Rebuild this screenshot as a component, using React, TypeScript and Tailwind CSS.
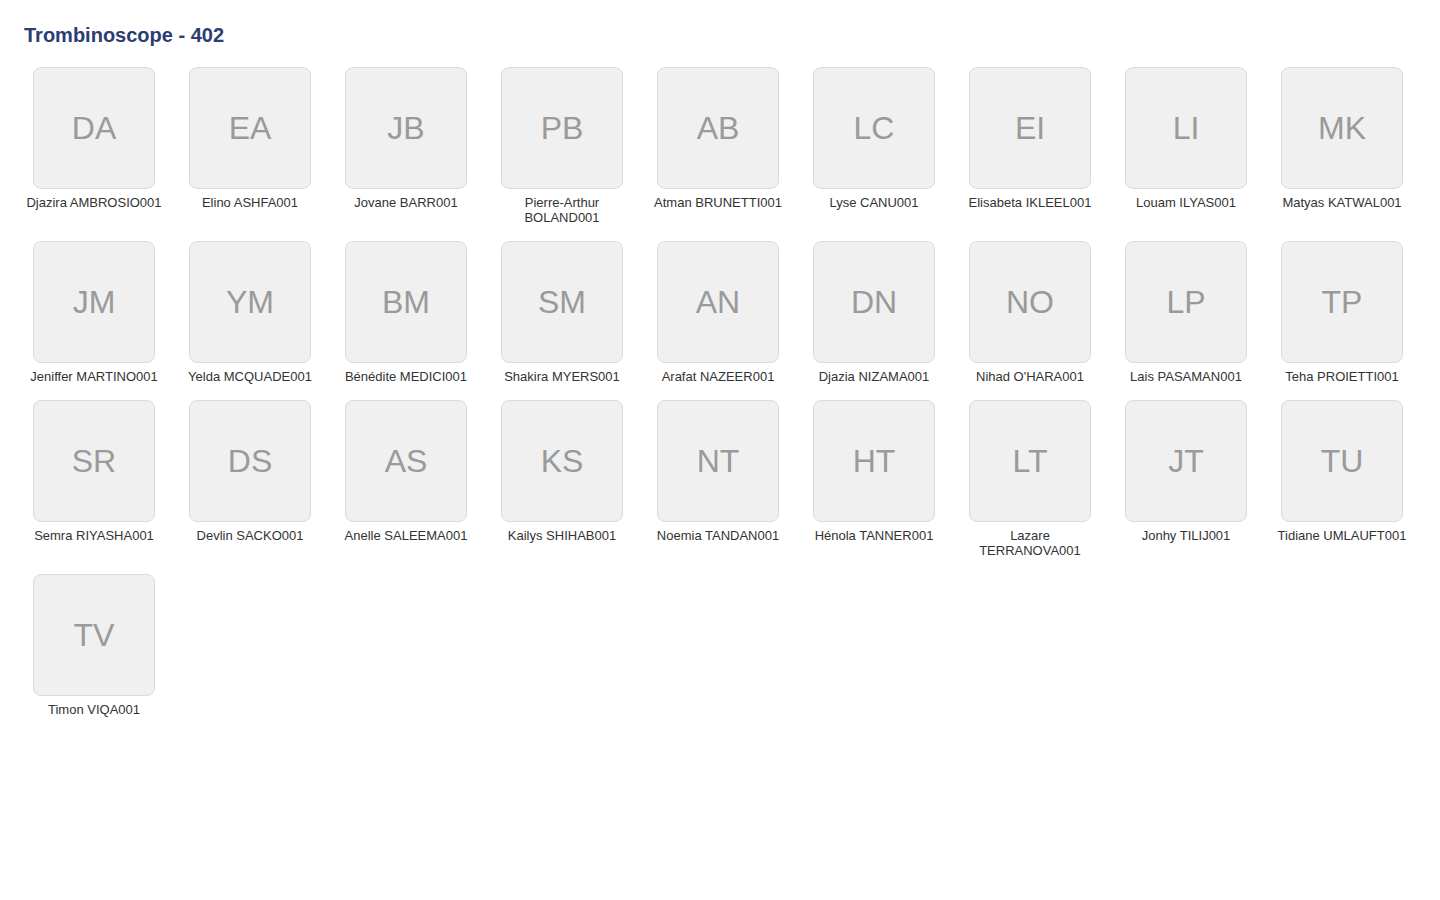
import React from "react";

const students = [
  "Djazira AMBROSIO001",
  "Elino ASHFA001",
  "Jovane BARR001",
  "Pierre-Arthur BOLAND001",
  "Atman BRUNETTI001",
  "Lyse CANU001",
  "Elisabeta IKLEEL001",
  "Louam ILYAS001",
  "Matyas KATWAL001",
  "Jeniffer MARTINO001",
  "Yelda MCQUADE001",
  "Bénédite MEDICI001",
  "Shakira MYERS001",
  "Arafat NAZEER001",
  "Djazia NIZAMA001",
  "Nihad O'HARA001",
  "Lais PASAMAN001",
  "Teha PROIETTI001",
  "Semra RIYASHA001",
  "Devlin SACKO001",
  "Anelle SALEEMA001",
  "Kailys SHIHAB001",
  "Noemia TANDAN001",
  "Hénola TANNER001",
  "Lazare TERRANOVA001",
  "Jonhy TILIJ001",
  "Tidiane UMLAUFT001",
  "Timon VIQA001",
];

function initials(name: string) {
  const parts = name.split(" ");
  const first = parts[0][0];
  const last = parts[parts.length - 1][0];
  return (first + last).toUpperCase();
}

export default function App() {
  return (
    <div
      className="min-h-screen bg-white px-6 pt-[23px]"
      style={{ fontFamily: '"Liberation Sans", Arial, sans-serif' }}
    >
      <h1 className="text-[20px] leading-[24px] font-bold text-[#2b3d72] mb-[20px]">
        Trombinoscope - 402
      </h1>
      <div className="flex flex-wrap gap-x-4 gap-y-4">
        {students.map((s) => (
          <div key={s} className="w-[140px] flex flex-col items-center">
            <div className="w-[122px] h-[122px] rounded-lg border border-[#dcdcdc] bg-[#f0f0f0] flex items-center justify-center">
              <span className="text-[32px] leading-none text-[#9a9a9a]">
                {initials(s)}
              </span>
            </div>
            <div className="mt-[6px] text-[13px] leading-[15px] text-[#333] text-center">
              {s}
            </div>
          </div>
        ))}
      </div>
    </div>
  );
}
